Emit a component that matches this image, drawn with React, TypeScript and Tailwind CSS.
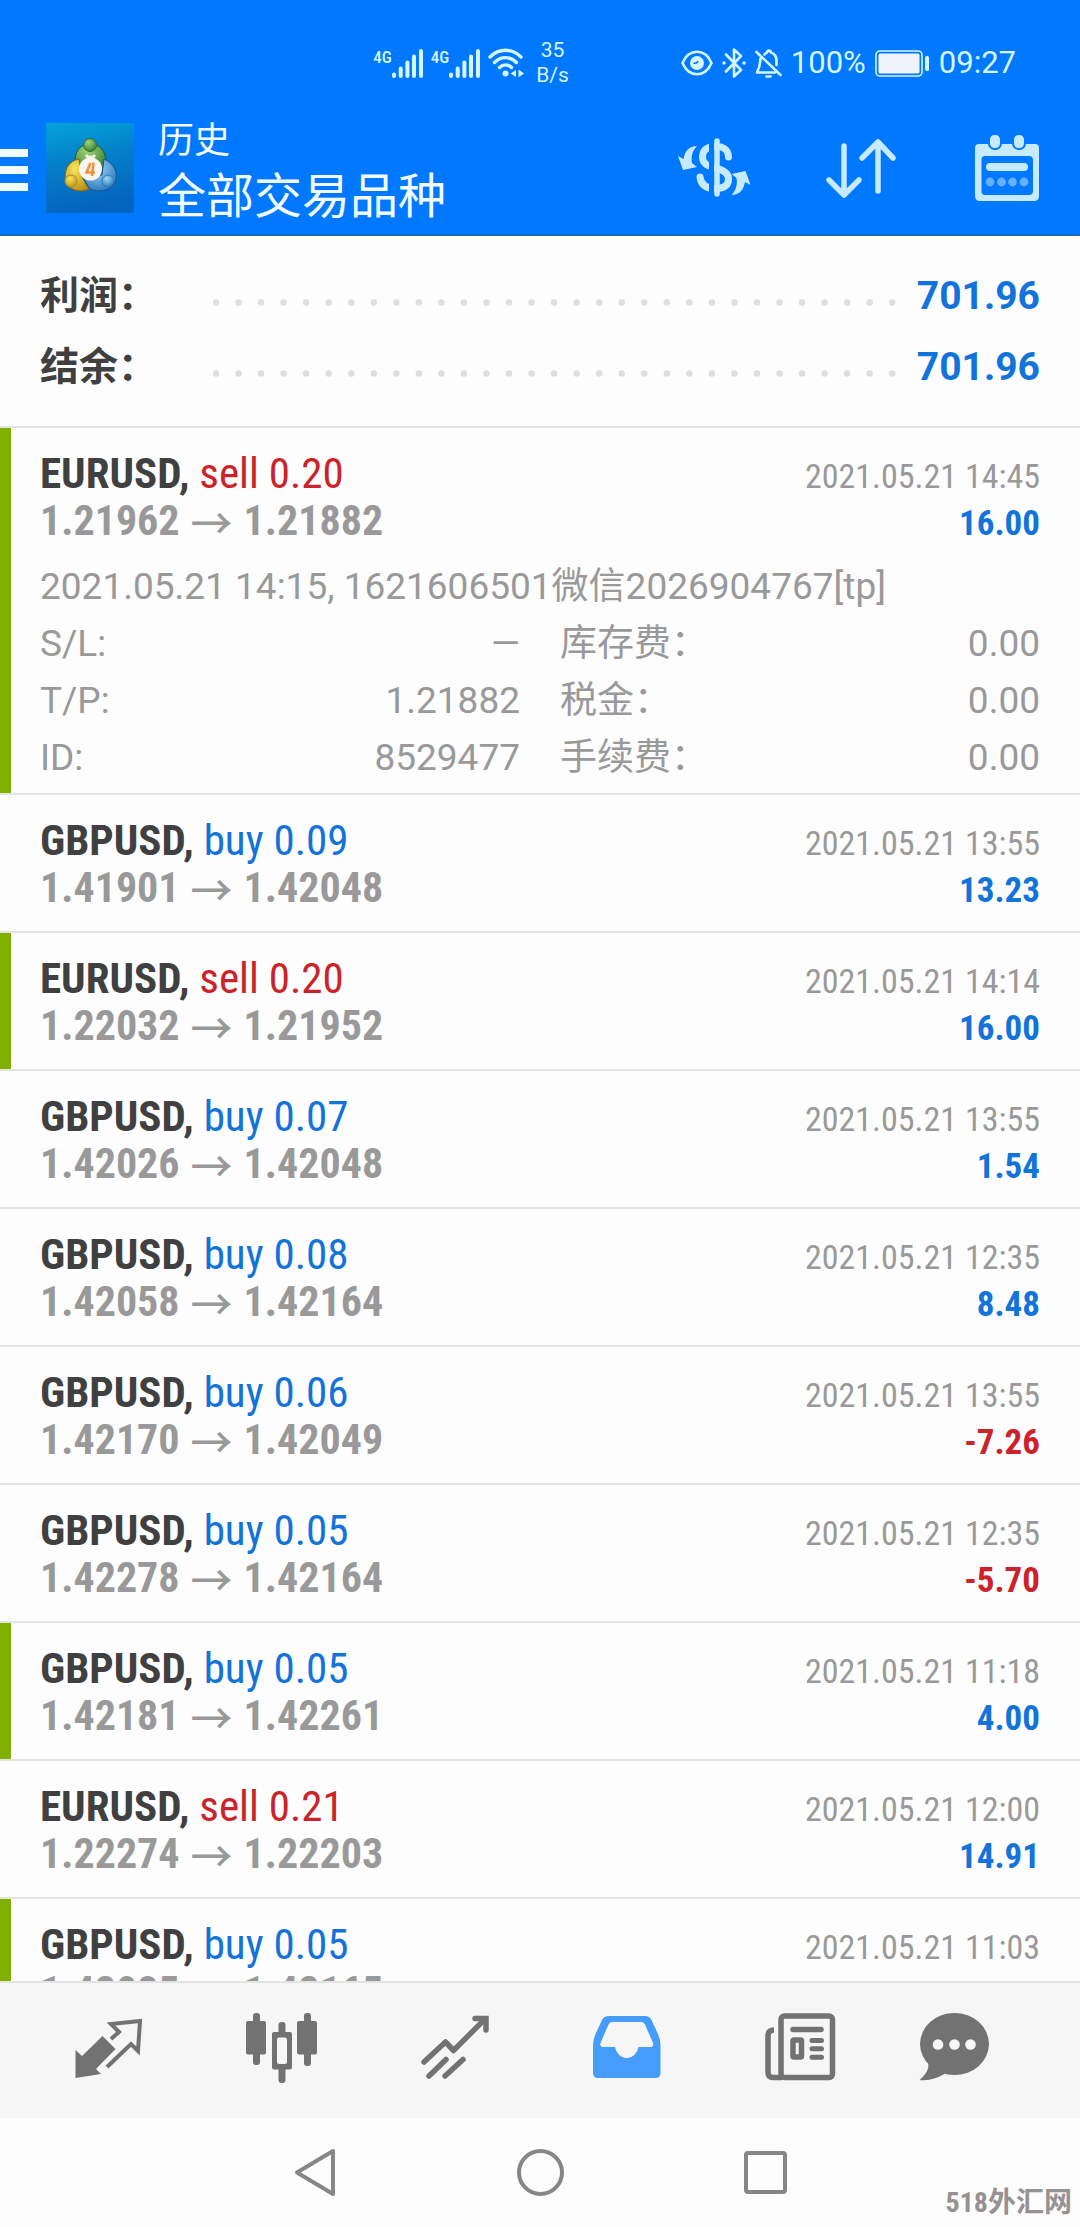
/**
 * @fileoverview Trading history screen: totals, closed deals and the bottom navigation.
 */
import React from 'react';

interface Deal {
    symbol: string;
    side: 'buy' | 'sell';
    volume: string;
    open: string;
    close: string;
    time: string;
    profit?: string;
    /** Closed by take profit, marked with a green bar. */
    hitTarget?: boolean;
    details?: DealDetails;
}

interface DealDetails {
    comment: string;
    rows: [string, string][];
}

const TOTALS: [string, string][] = [
    ['利润：', '701.96'],
    ['结余：', '701.96'],
];

const DEALS: Deal[] = [
    {
        symbol: 'EURUSD', side: 'sell', volume: '0.20', open: '1.21962', close: '1.21882',
        time: '2021.05.21 14:45', profit: '16.00', hitTarget: true,
        details: {
            comment: '2021.05.21 14:15, 1621606501微信2026904767[tp]',
            rows: [
                ['S/L:', '—'],
                ['库存费：', '0.00'],
                ['T/P:', '1.21882'],
                ['税金：', '0.00'],
                ['ID:', '8529477'],
                ['手续费：', '0.00'],
            ],
        },
    },
    { symbol: 'GBPUSD', side: 'buy', volume: '0.09', open: '1.41901', close: '1.42048', time: '2021.05.21 13:55', profit: '13.23' },
    { symbol: 'EURUSD', side: 'sell', volume: '0.20', open: '1.22032', close: '1.21952', time: '2021.05.21 14:14', profit: '16.00', hitTarget: true },
    { symbol: 'GBPUSD', side: 'buy', volume: '0.07', open: '1.42026', close: '1.42048', time: '2021.05.21 13:55', profit: '1.54' },
    { symbol: 'GBPUSD', side: 'buy', volume: '0.08', open: '1.42058', close: '1.42164', time: '2021.05.21 12:35', profit: '8.48' },
    { symbol: 'GBPUSD', side: 'buy', volume: '0.06', open: '1.42170', close: '1.42049', time: '2021.05.21 13:55', profit: '-7.26' },
    { symbol: 'GBPUSD', side: 'buy', volume: '0.05', open: '1.42278', close: '1.42164', time: '2021.05.21 12:35', profit: '-5.70' },
    { symbol: 'GBPUSD', side: 'buy', volume: '0.05', open: '1.42181', close: '1.42261', time: '2021.05.21 11:18', profit: '4.00', hitTarget: true },
    { symbol: 'EURUSD', side: 'sell', volume: '0.21', open: '1.22274', close: '1.22203', time: '2021.05.21 12:00', profit: '14.91' },
    { symbol: 'GBPUSD', side: 'buy', volume: '0.05', open: '1.42085', close: '1.42165', time: '2021.05.21 11:03', hitTarget: true },
];

/* ---------- Status bar ---------- */

const SignalBars: React.FC = () => (
    <div className="flex">
        <span className="h-[29px] font-['Roboto_Condensed','Roboto',sans-serif] text-[17px] leading-[16px] font-medium">4G</span>
        <svg className="h-[29px] w-[31px]" viewBox="0 0 31 29" stroke="currentColor" strokeWidth="4" strokeLinecap="round">
            <path d="M2 25.5V27M8.7 19.5V27M15.4 13.5V27M22 7.5V27M29 2V27" />
        </svg>
    </div>
);

const WifiIcon: React.FC = () => (
    <svg className="h-[30px] w-9" viewBox="0 0 36 30" fill="none" stroke="currentColor" strokeWidth="3.4" strokeLinecap="round">
        <path d="M2 9C11 0 24 0 33 9M6.5 14.5C13 8 22 8 28.5 14.5M11.5 19.5C15 16 20 16 23.5 19.5" />
        <circle cx="17.5" cy="25.5" r="3" fill="currentColor" stroke="none" />
        <path d="M28 22V29L22.5 25.5ZM30.5 21.5V29.5L36 25.5Z" fill="currentColor" stroke="none" />
    </svg>
);

const EyeIcon: React.FC = () => (
    <svg className="h-[26px] w-8" viewBox="0 0 32 26" fill="none" stroke="currentColor" strokeWidth="2.6">
        <path d="M1.5 13C8 -2 24 -2 30.5 13C24 28 8 28 1.5 13Z" />
        <circle cx="16" cy="13" r="7" fill="currentColor" stroke="none" />
        <path d="M12.5 13A3.5 3.5 0 0 0 17 11" stroke="#0078ff" strokeWidth="1.6" />
    </svg>
);

const BluetoothIcon: React.FC = () => (
    <svg className="h-[30px] w-6" viewBox="0 0 24 30" fill="none" stroke="currentColor" strokeWidth="2.6" strokeLinejoin="round" strokeLinecap="round">
        <path d="M4 6.5L19 22L12 28.5V1.5L19 8L4 23.5" />
        <path d="M2 15H2.1M22 15H22.1" strokeWidth="3.4" />
    </svg>
);

const BellOffIcon: React.FC = () => (
    <svg className="h-[29px] w-[27px]" viewBox="0 0 27 29" fill="none" stroke="currentColor" strokeWidth="2.6" strokeLinecap="round" strokeLinejoin="round">
        <path d="M1.5 3L25.5 26" />
        <path d="M9.5 5.5C11 3.8 12 3.5 12 3.5C12.5 1 15.5 1 16 3.5C20.5 5 21.5 8 21.5 12V16" />
        <path d="M5.5 9.5C5 14 5.5 17 2 23.5H20" />
        <path d="M11.5 27.5H15.5" />
    </svg>
);

const BatteryIcon: React.FC = () => (
    <svg className="h-[27px] w-[55px]" viewBox="0 0 55 27">
        <rect x="1" y="1" width="46" height="25" rx="4" fill="none" stroke="currentColor" strokeWidth="1.6" />
        <rect x="3.5" y="3.5" width="41" height="20" rx="1.5" fill="#f0f4fc" />
        <rect x="50" y="6" width="4" height="15" rx="1.5" fill="currentColor" />
    </svg>
);

/* ---------- App bar ---------- */

const AppLogo: React.FC = () => (
    <svg className="h-[90px] w-[88px]" viewBox="0 0 88 90" fill="none">
        <defs>
            <linearGradient id="logo-bg" x1="0" y1="0" x2="0.2" y2="1">
                <stop offset="0" stopColor="#03a3dc" />
                <stop offset="0.5" stopColor="#057dc6" />
                <stop offset="1" stopColor="#0465c0" />
            </linearGradient>
            <radialGradient id="logo-green" cx="0.4" cy="0.3" r="0.8">
                <stop offset="0" stopColor="#a5d07a" />
                <stop offset="1" stopColor="#2b7a2c" />
            </radialGradient>
            <radialGradient id="logo-yellow" cx="0.4" cy="0.3" r="0.8">
                <stop offset="0" stopColor="#f8e45c" />
                <stop offset="1" stopColor="#b98d10" />
            </radialGradient>
            <radialGradient id="logo-blue" cx="0.4" cy="0.3" r="0.8">
                <stop offset="0" stopColor="#9bd6f7" />
                <stop offset="1" stopColor="#2170b8" />
            </radialGradient>
        </defs>
        <rect width="88" height="90" fill="url(#logo-bg)" />
        <path d="M29 42C28 28 34 21 44 21C54 21 60 28 60 40L55 46H36Z" fill="url(#logo-green)" stroke="#1d5c33" />
        <path d="M33 36C22 38 17 48 20 60C24 68 36 70 43 66L36 54Z" fill="url(#logo-yellow)" stroke="#7b6a18" />
        <path d="M58 36C68 40 73 50 69 60C64 68 52 70 44 66C40 60 38 58 38 54L56 52Z" fill="url(#logo-blue)" stroke="#1b4f8d" />
        <circle cx="44" cy="22" r="6.5" fill="url(#logo-green)" stroke="#2f6b35" />
        <circle cx="25" cy="58" r="6" fill="url(#logo-yellow)" stroke="#b08a1c" />
        <circle cx="62" cy="58" r="6" fill="url(#logo-blue)" stroke="#2c76b8" />
        <path d="M40 32C42 35 47 35 49 32" stroke="#eaf6e0" strokeWidth="3" />
        <circle cx="44.5" cy="46" r="11.5" fill="#fbf6ef" />
        <path d="M44.5 40L40.5 49.5H49M47.5 39.5L46 53" stroke="#ee9440" strokeWidth="2.6" />
    </svg>
);

const CurrencyIcon: React.FC = () => (
    <svg className="h-[62px] w-[76px]" viewBox="-3 0 76 62" fill="none" stroke="currentColor" strokeWidth="7">
        <path d="M51.5 20C51 11 45 9.5 38 9.5C29 9.5 25.5 14 25.5 20C25.5 27 31 29 38 31C47 33 51.5 37 51.5 42C51.5 49 46 51.5 38 51.5C29 51.5 24 48 23 40" strokeLinecap="round" />
        <path d="M34.5 4V58" stroke="#0078ff" strokeWidth="5" />
        <path d="M40 4V57" strokeWidth="5.5" strokeLinecap="round" />
        <g fill="currentColor" stroke="none">
            <path d="M20 9C12 9 8 14 6.5 22L1 19L6 33L20 30L15 26C14 20 15 14 20 9Z" />
            <path d="M54.5 58C62.5 58 66.5 53 68 45L73.5 48L68.5 34L54.5 37L59.5 41C60.5 47 59.5 53 54.5 58Z" />
        </g>
    </svg>
);

const SortIcon: React.FC = () => (
    <svg className="h-[62px] w-[72px]" viewBox="0 0 72 62" fill="none" stroke="currentColor" strokeWidth="5.5" strokeLinecap="round" strokeLinejoin="round">
        <path d="M18 9V58M3 43L18 58L33 43" />
        <path d="M52 54V5M36 21L52 5L67 21" />
    </svg>
);

const CalendarIcon: React.FC = () => (
    <svg className="h-[68px] w-[66px]" viewBox="0 0 66 68" fill="currentColor">
        <path fillRule="evenodd" d="M5 10H61Q65 10 65 14V62Q65 67 60 67H6Q1 67 1 62V14Q1 10 5 10ZM11 22Q7.5 22 7.5 26V57Q7.5 61 11 61H55Q59 61 59 57V26Q59 22 55 22Z" />
        <g stroke="#0078ff" strokeWidth="2">
            <rect x="15" y="0" width="12" height="15" rx="5.5" />
            <rect x="39" y="0" width="12" height="15" rx="5.5" />
        </g>
        <rect x="12" y="29" width="42" height="8" rx="4" />
        <g opacity="0.5">
            <circle cx="16" cy="48" r="4.4" />
            <circle cx="27.5" cy="48" r="4.4" />
            <circle cx="38.5" cy="48" r="4.4" />
            <circle cx="50" cy="48" r="4.4" />
        </g>
    </svg>
);

/* ---------- Bottom tabs ---------- */

const QuotesIcon: React.FC = () => (
    <svg className="size-[72px]" viewBox="0 0 72 72" fill="none">
        <path d="M38 27L46 20L38 12L67 9L65 39L58 32L34 55" stroke="currentColor" strokeWidth="4" />
        <path d="M29.5 24L42.5 37L23 57L28 62L2.5 66V38L9 44Z" fill="currentColor" />
    </svg>
);

const ChartsIcon: React.FC = () => (
    <svg className="size-[72px]" viewBox="1 0 72 72" fill="currentColor">
        <rect x="8" y="1" width="7" height="52" rx="3" />
        <rect x="1" y="9" width="20" height="33.5" rx="2" />
        <rect x="33.5" y="10" width="7" height="61" rx="3" />
        <rect x="27" y="20" width="20" height="37.5" rx="2" />
        <rect x="32" y="25.5" width="10" height="26.5" rx="2" fill="#f6f6f6" />
        <rect x="59" y="1" width="7" height="53" rx="3" />
        <rect x="52" y="9" width="20" height="33.5" rx="2" />
    </svg>
);

const TradeIcon: React.FC = () => (
    <svg className="size-[72px]" viewBox="0 0 72 72" fill="none" stroke="currentColor" strokeWidth="5.5" strokeLinecap="round">
        <path d="M5 50L26.5 30L34.5 38.5L66 7" strokeLinejoin="round" />
        <path d="M56 6.5H67V18" />
        <path d="M10 64L27 47.5M26 64L44 47.5" />
    </svg>
);

const HistoryIcon: React.FC = () => (
    <svg className="size-[72px]" viewBox="0 0 72 72" fill="currentColor">
        <path fillRule="evenodd" d="M18 4H54Q58.5 4 60.5 8L67 22Q69.5 28 69.5 33V61Q69.5 66 64.5 66H7Q2 66 2 61V33Q2 28 4.5 22L11 8Q13 4 18 4ZM21 10Q18.5 10 17.5 12.5L9.5 31Q8.5 35 12 35H24A12 14 0 0 0 47.5 35H59.5Q63 35 62 31L54 12.5Q53 10 50.5 10Z" />
    </svg>
);

const NewsIcon: React.FC = () => (
    <svg className="size-[72px]" viewBox="0 0 72 72" fill="none" stroke="currentColor" strokeWidth="5.5">
        <rect x="17" y="4" width="51.5" height="61.5" rx="3.5" />
        <path d="M10 18Q4 18 4 24V60Q4 65.5 9 65.5H18" />
        <path d="M29 17.5H57" strokeLinecap="round" />
        <rect x="29" y="28" width="8.5" height="17" rx="1" />
        <path d="M48 28.5H57.5M48 36.8H57.5M48 45.3H57.5" strokeLinecap="round" strokeWidth="5" />
    </svg>
);

const ChatIcon: React.FC = () => (
    <svg className="size-[72px]" viewBox="0 0 72 72" fill="currentColor">
        <ellipse cx="36.5" cy="32" rx="34.5" ry="31" />
        <path d="M10 50C12 58 6 64 1.5 68C11 69 20 66 28 61Z" />
        <g fill="#f6f6f6">
            <circle cx="20" cy="32.5" r="5.3" />
            <circle cx="36.5" cy="32.5" r="5.3" />
            <circle cx="52.5" cy="32.5" r="5.3" />
        </g>
    </svg>
);

const TABS = [
    { label: 'Quotes', Icon: QuotesIcon },
    { label: 'Charts', Icon: ChartsIcon },
    { label: 'Trade', Icon: TradeIcon },
    { label: 'History', Icon: HistoryIcon, active: true },
    { label: 'News', Icon: NewsIcon },
    { label: 'Chat', Icon: ChatIcon },
];

const StatusBar: React.FC = () => (
    <div className="flex h-[54px] items-center justify-end gap-28 pr-16 font-['Roboto',sans-serif] text-[#d3f6ff]">
        <div className="flex items-center gap-2">
            <SignalBars />
            <SignalBars />
            <WifiIcon />
            <div className="ml-1 text-center text-[21px] leading-[25px]">
                <div>35</div>
                <div>B/s</div>
            </div>
        </div>
        <div className="flex items-center gap-[9px] text-[31px] leading-[54px]">
            <EyeIcon />
            <BluetoothIcon />
            <BellOffIcon />
            <span>100%</span>
            <BatteryIcon />
            <span>09:27</span>
        </div>
    </div>
);

const AppBar: React.FC = () => (
    <div className="flex items-center pt-6 pr-10 pb-3 text-[#c6eaff]">
        <button type="button" aria-label="Menu" className="mt-1 flex w-7 flex-col gap-[9px]">
            <span className="h-2 w-full bg-[#f2fcff]" />
            <span className="h-2 w-full bg-[#f2fcff]" />
            <span className="h-2 w-full bg-[#f2fcff]" />
        </button>
        <div className="ml-[18px]">
            <AppLogo />
        </div>
        <h1 className="-mb-1 ml-6 flex flex-col text-[#f2fcff]">
            <span className="text-[36px] leading-[54px]">历史</span>
            <span className="text-[48px] leading-[58px]">全部交易品种</span>
        </h1>
        <div className="ml-auto flex items-center gap-[76px]">
            <button type="button" aria-label="Currency"><CurrencyIcon /></button>
            <button type="button" aria-label="Sort"><SortIcon /></button>
            <button type="button" aria-label="Period"><CalendarIcon /></button>
        </div>
    </div>
);

const Totals: React.FC = () => (
    <dl className="border-b-2 border-[#e3e3e3] px-10 pt-[25px] pb-[23px] text-[39px] leading-[71px] font-bold">
        {TOTALS.map(([label, value]) => (
            <div key={label} className="flex items-center">
                <dt className="w-[173px] text-[#404040]">{label}</dt>
                <dd className="flex flex-1 items-center gap-5 text-[#1273da]">
                    <svg className="mt-3 h-[7px] flex-1" stroke="#dedede" strokeWidth="6.5" strokeLinecap="round">
                        <line x1="3" y1="3.5" x2="100%" y2="3.5" strokeDasharray="0 22.54" />
                    </svg>
                    {value}
                </dd>
            </div>
        ))}
    </dl>
);

const DealRow: React.FC<{ deal: Deal }> = ({ deal }) => (
    <li className="flex border-b-2 border-[#e3e3e3]">
        <div className={deal.hitTarget ? 'w-[11px] bg-[#7fb000]' : 'w-[11px]'} />
        <div className="flex-1 pt-[21px] pr-10 pb-[19px] pl-[29px]">
            <div className="flex h-24 items-baseline justify-between font-['Roboto_Condensed','Noto_Sans_CJK_SC',sans-serif] leading-[48px]">
                <div>
                    <div className="text-[43px] text-[#404040]">
                        <b>{deal.symbol},</b>{' '}
                        <span className={deal.side === 'buy' ? 'text-[#1273da]' : 'text-[#cc2229]'}>
                            {deal.side} {deal.volume}
                        </span>
                    </div>
                    <div className="flex h-12 items-center gap-[11px] text-[42px] font-bold text-[#999]">
                        <span>{deal.open}</span>
                        <span className="font-['Noto_Sans_CJK_SC',sans-serif] font-medium">→</span>
                        <span>{deal.close}</span>
                    </div>
                </div>
                <div className="text-right">
                    <div className="text-[34px] text-[#999]">{deal.time}</div>
                    <div className={deal.profit?.startsWith('-') ? 'text-[35px] font-bold text-[#cc2229]' : 'text-[35px] font-bold text-[#1273da]'}>
                        {deal.profit}
                    </div>
                </div>
            </div>
            {deal.details && (
                <div className="-mb-3 pt-[13px] text-[37px] leading-[57px] text-[#999]">
                    <p>{deal.details.comment}</p>
                    <dl className="grid grid-cols-2 gap-x-10">
                        {deal.details.rows.map(([label, value]) => (
                            <div key={label} className="flex justify-between">
                                <dt>{label}</dt>
                                <dd>{value}</dd>
                            </div>
                        ))}
                    </dl>
                </div>
            )}
        </div>
    </li>
);

export default function App() {
    return (
        <div className="relative flex h-screen flex-col bg-[#fdfdfd] font-['Roboto','Noto_Sans_CJK_SC',sans-serif]">
            <header className="shrink-0 border-b-2 border-[#1b66c2] bg-[#0078ff] pt-9">
                <StatusBar />
                <AppBar />
            </header>
            <main className="min-h-0 flex-1 overflow-hidden">
                <Totals />
                <ul>
                    {DEALS.map((deal, i) => (
                        <DealRow key={i} deal={deal} />
                    ))}
                </ul>
            </main>
            <nav className="grid shrink-0 grid-cols-[repeat(5,173fr)_136fr] border-t-2 border-[#e3e3e3] bg-[#f6f6f6] pt-[29px] pr-[58px] pb-[34px] pl-[23px]">
                {TABS.map(({ label, Icon, active }) => (
                    <button
                        key={label}
                        type="button"
                        aria-label={label}
                        className={active ? 'flex justify-center text-[#459cfa]' : 'flex justify-center text-[#727272]'}
                    >
                        <Icon />
                    </button>
                ))}
            </nav>
            {/* System navigation keys */}
            <div className="flex h-[109px] shrink-0 items-center justify-center gap-44 text-[#868686]">
                <button type="button" aria-label="Back">
                    <svg className="size-[49px]" viewBox="0 0 49 49" fill="none" stroke="currentColor" strokeWidth="4" strokeLinejoin="round">
                        <path d="M42 3V46L6 24.5Z" />
                    </svg>
                </button>
                <button type="button" aria-label="Home">
                    <svg className="size-[49px]" viewBox="0 0 49 49" fill="none" stroke="currentColor" strokeWidth="4">
                        <circle cx="24.5" cy="24.5" r="21.5" />
                    </svg>
                </button>
                <button type="button" aria-label="Recent apps">
                    <svg className="size-[49px]" viewBox="0 0 49 49" fill="none" stroke="currentColor" strokeWidth="4">
                        <rect x="5" y="5" width="39" height="39" rx="2" />
                    </svg>
                </button>
            </div>
            <div className="absolute right-2 bottom-1 font-['Roboto_Condensed','Noto_Sans_CJK_SC',sans-serif] text-[28px] leading-[40px] font-bold text-[#969292]">
                518外汇网
            </div>
        </div>
    );
}
